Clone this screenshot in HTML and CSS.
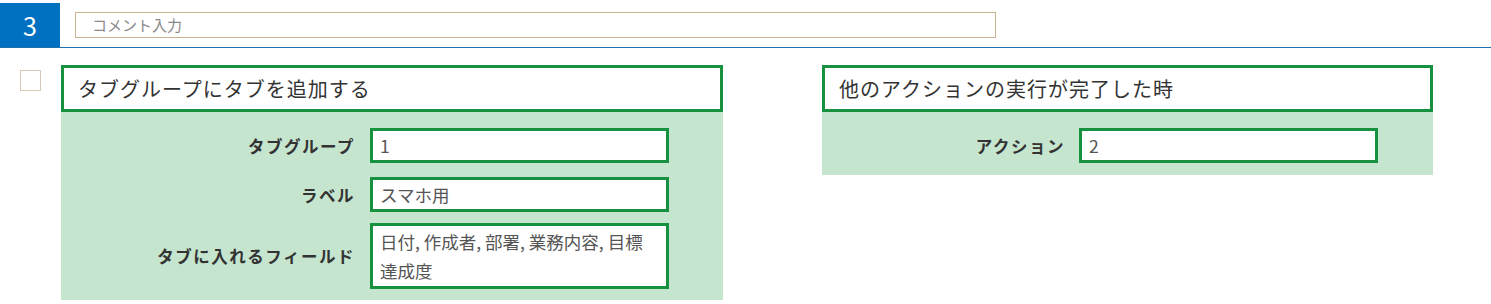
FILE: index.html
```html
<!DOCTYPE html>
<html lang="ja">
<head>
<meta charset="utf-8">
<link rel="stylesheet" href="styles.css">
</head>
<body>
<header class="head">
  <div class="num">3</div>
  <div class="comment">コメント入力</div>
</header>
<main class="main">
  <div class="check"></div>
  <section class="card card-left">
    <div class="title">タブグループにタブを追加する</div>
    <div class="body">
      <div class="row r1">
        <div class="label">タブグループ</div>
        <div class="field">1</div>
      </div>
      <div class="row r2">
        <div class="label">ラベル</div>
        <div class="field">スマホ用</div>
      </div>
      <div class="row">
        <div class="label">タブに入れるフィールド</div>
        <div class="field tall">日付, 作成者, 部署, 業務内容, 目標<br>達成度</div>
      </div>
    </div>
  </section>
  <section class="card card-right">
    <div class="title">他のアクションの実行が完了した時</div>
    <div class="body">
      <div class="row">
        <div class="label">アクション</div>
        <div class="field">2</div>
      </div>
    </div>
  </section>
</main>
</body>
</html>
```
FILE: styles.css
```css
* { box-sizing: border-box; }
body {
  margin: 0;
  background: #fff;
  font-family: "Noto Sans CJK JP", "Noto Sans", sans-serif;
  color: #333;
}
.head {
  display: flex;
  align-items: flex-start;
  height: 48px;
  border-bottom: 1px solid #1f6eae;
}
.num {
  width: 60px;
  height: 44px;
  margin-top: 3px;
  background: #0070c0;
  color: #fff;
  font-size: 25px;
  line-height: 44px;
  text-align: center;
}
.comment {
  margin-left: 15px;
  margin-top: 12px;
  width: 921px;
  height: 26px;
  border: 1px solid #cbb392;
  padding-left: 16px;
  font-size: 15px;
  line-height: 24px;
  color: #8a8a8a;
}
.main {
  display: flex;
  align-items: flex-start;
  padding-top: 17px;
}
.check {
  width: 21px;
  height: 21px;
  margin-left: 20px;
  margin-top: 5px;
  border: 1px solid #d8c9b6;
}
.card-left { margin-left: 20px; width: 662px; }
.card-right { margin-left: 99px; width: 611px; }
.title {
  height: 47px;
  border: 3px solid #16913f;
  padding-left: 14px;
  font-size: 20px;
  letter-spacing: 1px;
  line-height: 41px;
  color: #333;
  background: #fff;
}
.body {
  background: #c5e5cf;
  padding: 16px 0 11px;
}
.card-right .body { padding-bottom: 12px; }
.row {
  display: flex;
  align-items: center;
}
.r1 { margin-bottom: 14px; }
.r2 { margin-bottom: 11px; }
.label {
  width: 294px;
  text-align: right;
  font-weight: bold;
  font-size: 16.5px;
  letter-spacing: 1.5px;
  color: #333;
  margin-right: 15px;
}
.card-right .label { width: 243px; margin-right: 14px; }
.field {
  width: 299px;
  height: 35px;
  border: 3px solid #16913f;
  background: #fff;
  padding-left: 7px;
  font-size: 17.5px;
  line-height: 29px;
  color: #555;
}
.field.tall {
  height: 66px;
  padding-top: 1px;
}
```
